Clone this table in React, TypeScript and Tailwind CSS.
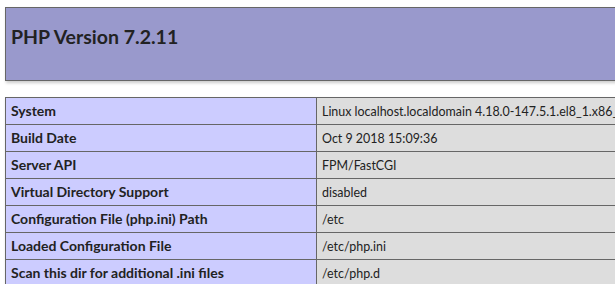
import React from 'react';

const rows: [string, string][] = [
  ['System', 'Linux localhost.localdomain 4.18.0-147.5.1.el8_1.x86_64 #1 SMP Wed Feb 5 02:00:39 UTC 2020 x86_64'],
  ['Build Date', 'Oct 9 2018 15:09:36'],
  ['Server API', 'FPM/FastCGI'],
  ['Virtual Directory Support', 'disabled'],
  ['Configuration File (php.ini) Path', '/etc'],
  ['Loaded Configuration File', '/etc/php.ini'],
  ['Scan this dir for additional .ini files', '/etc/php.d'],
  ['Additional .ini files parsed', '/etc/php.d/20-bz2.ini'],
];

const App: React.FC = () => {
  return (
    <div className="w-screen h-screen overflow-hidden bg-white text-[#222] font-['Lato','Open_Sans',sans-serif]">
      <div className="pt-[7px] pl-[5px]">
        {/* Header */}
        <div className="w-[934px] h-[74px] border border-[#666] bg-[#99c] shadow-[1px_2px_3px_#ccc] px-[5px] pt-[16px]">
          <h1 className="text-[19.5px] font-bold leading-[25px]">PHP Version 7.2.11</h1>
        </div>

        {/* Info table */}
        <table className="mt-[16px] w-[934px] border-collapse shadow-[1px_2px_3px_#ccc]">
          <tbody>
            {rows.map(([k, v]) => (
              <tr key={k}>
                <td className="w-[311px] h-[27px] border border-[#666] bg-[#ccf] px-[5px] pt-[4px] pb-0 align-baseline text-[14px] leading-[18px] font-bold whitespace-nowrap">{k}</td>
                <td className="h-[27px] border border-[#666] bg-[#ddd] px-[5px] pt-[4px] pb-0 align-baseline text-[12.45px] leading-[18px] whitespace-nowrap overflow-hidden">{v}</td>
              </tr>
            ))}
          </tbody>
        </table>
      </div>
    </div>
  );
};

export default App;
